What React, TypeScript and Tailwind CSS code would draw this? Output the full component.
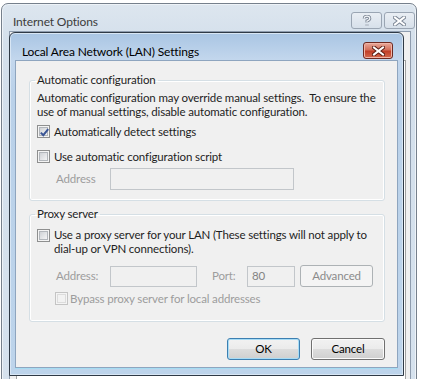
import clsx from "clsx";

const font = "font-['Lato',sans-serif]";

function CheckBox({ checked = false, disabled = false }: { checked?: boolean; disabled?: boolean }) {
  return (
    <span
      className={clsx(
        "relative flex h-[13px] w-[13px] shrink-0 items-center justify-center border bg-[#f4f4f4]",
        disabled ? "border-[#c4c4c4]" : "border-[#8e8f8f]",
      )}
    >
      <span
        className={clsx(
          "h-[9px] w-[9px] border",
          disabled
            ? "border-[#dcdcdc] bg-[#f2f2f2]"
            : "border-[#b2b6bb] bg-[linear-gradient(135deg,#cfd2d6,#f4f4f5)]",
        )}
      />
      {checked && (
        <svg className="absolute left-[1px] top-[1px]" width="11" height="11" viewBox="0 0 11 11">
          <path d="M1.8 5.6 L4.3 8.2 L9.2 2.2" fill="none" stroke="#3a5595" strokeWidth="2" />
        </svg>
      )}
    </span>
  );
}

function TextBox({ className, value }: { className?: string; value?: string }) {
  return (
    <div
      className={clsx(
        "flex h-[21px] items-center border border-[#c2c6ca] bg-[#f0f0f0] px-[4px] text-[#838383]",
        className,
      )}
    >
      {value}
    </div>
  );
}

function Button({ label, primary = false, disabled = false, className }: { label: string; primary?: boolean; disabled?: boolean; className?: string }) {
  return (
    <div
      className={clsx(
        "flex items-center justify-center rounded-[3px] border",
        disabled
          ? "border-[#adb2b5] bg-[#f4f4f4] text-[#8b8b8b]"
          : primary
            ? "border-[#3c7fb1] bg-[linear-gradient(#f2f2f2_0%,#ebebeb_50%,#dddddd_50%,#cfcfcf_100%)] text-black shadow-[inset_0_0_0_1px_#a7dcf6]"
            : "border-[#707070] bg-[linear-gradient(#f2f2f2_0%,#ebebeb_50%,#dddddd_50%,#cfcfcf_100%)] text-black shadow-[inset_0_0_0_1px_#fbfbfb]",
        className,
      )}
    >
      {label}
    </div>
  );
}

function CloseGlyph({ dark }: { dark: string }) {
  return (
    <svg width="13" height="10" viewBox="0 0 13 10">
      <path d="M2 1.5 L11 8.5 M11 1.5 L2 8.5" stroke={dark} strokeWidth="4" strokeLinecap="square" />
      <path d="M2 1.5 L11 8.5 M11 1.5 L2 8.5" stroke="#ffffff" strokeWidth="2" strokeLinecap="square" />
    </svg>
  );
}

function HelpGlyph() {
  return (
    <svg width="10" height="12" viewBox="0 0 10 12">
      <path d="M2.2 3.6 Q2.2 1.2 5 1.2 Q7.8 1.2 7.8 3.6 Q7.8 5.2 5 6 L5 7.6 M5 9.6 L5 10.6" fill="none" stroke="#7b8594" strokeWidth="3" />
      <path d="M2.2 3.6 Q2.2 1.2 5 1.2 Q7.8 1.2 7.8 3.6 Q7.8 5.2 5 6 L5 7.6 M5 9.6 L5 10.6" fill="none" stroke="#f2f5f8" strokeWidth="1.2" />
    </svg>
  );
}

export default function App() {
  return (
    <div className={clsx("relative h-[379px] w-[424px] overflow-hidden whitespace-nowrap bg-white text-[11.5px] tracking-[-0.15px] text-[#1e1e1e]", font)}>
      {/* Internet Options (inactive, behind) */}
      <div className="absolute left-[1px] top-[3px] h-[420px] w-[416px] rounded-t-[7px] border border-[#76808c] bg-[linear-gradient(#dde6ef,#d3dfeb_40px,#d6e2ee)] shadow-[inset_0_0_0_1px_#eef3f8]">
        <div className="flex h-[27px] items-start justify-between">
          <span className="ml-[11px] mt-[10px] text-[12px] leading-[15px] text-[#3c3c3c]">Internet Options</span>
          <div className="mr-[1px] mt-[8px] flex gap-[2px]">
            <div className="flex h-[17px] w-[31px] items-center justify-center rounded-[3px] border border-[#9aa5b3] bg-[linear-gradient(#e9eef4,#d7e0ea)]">
              <HelpGlyph />
            </div>
            <div className="flex h-[17px] w-[31px] items-center justify-center rounded-[3px] border border-[#9aa5b3] bg-[linear-gradient(#e9eef4,#d7e0ea)]">
              <CloseGlyph dark="#7b8594" />
            </div>
          </div>
        </div>
        <div className="ml-[7px] mr-[5px] h-[400px] border border-[#8e9cae] bg-[#f0f0f0] pt-[28px]">
          <div className="ml-[6px] mr-[4px] h-[360px] border border-[#a0a0a0] bg-white" />
        </div>
      </div>

      {/* LAN settings dialog (active) */}
      <div className="absolute left-[9px] top-[32px] flex h-[344px] w-[395px] flex-col rounded-t-[6px] border border-[#2f3a46] bg-[linear-gradient(#a9c5e3,#c3d7ed_27px,#bad1e9_60px,#bdd4eb)] shadow-[inset_0_0_0_1px_#d8e6f4]">
        <div className="flex h-[27px] shrink-0 items-start justify-between">
          <span className="ml-[12px] mt-[11px] text-[12px] leading-[15px] text-black">Local Area Network (LAN) Settings</span>
          <div className="mr-[10px] mt-[9px] flex h-[17px] w-[30px] items-center justify-center rounded-[3px] border border-[#6e2a22] bg-[linear-gradient(#e9a99b,#d3705c_45%,#c13f28_55%,#d46a4f)] shadow-[inset_0_0_0_1px_#f0b5a8]">
            <CloseGlyph dark="#5a1d14" />
          </div>
        </div>
        <div className="mx-[5px] mb-[7px] flex-1 border border-[#8ea5bf] bg-[#f0f0f0] shadow-[0_1px_0_#a6dcf2]">
          <fieldset className="ml-[13px] mt-[12px] w-[356px] rounded-[3px] border border-[#d5dfe5] pb-[10px] pl-[7px] shadow-[inset_0_0_0_1px_#ffffff]">
            <legend className="-ml-[2px] px-[2px] leading-[14px]">Automatic configuration</legend>
            <p className="mt-[4px] leading-[14px]">
              Automatic configuration may override manual settings.&nbsp; To ensure the
              <br />
              use of manual settings, disable automatic configuration.
            </p>
            <label className="mt-[5px] flex items-center gap-[4px] leading-[15px]">
              <CheckBox checked />
              Automatically detect settings
            </label>
            <label className="mt-[10px] flex items-center gap-[4px] leading-[15px]">
              <CheckBox />
              Use automatic configuration script
            </label>
            <div className="ml-[19px] mt-[4px] flex items-center">
              <span className="w-[54px] text-[#9d9d9d]">Address</span>
              <TextBox className="h-[22px] w-[184px]" />
            </div>
          </fieldset>

          <fieldset className="ml-[13px] mt-[6px] w-[356px] rounded-[3px] border border-[#d5dfe5] pb-[15px] pl-[7px] shadow-[inset_0_0_0_1px_#ffffff]">
            <legend className="-ml-[2px] px-[2px] leading-[14px]">Proxy server</legend>
            <div className="mt-[7px] flex items-start gap-[4px] leading-[14px]">
              <span className="mt-[1px]">
                <CheckBox />
              </span>
              <span>
                Use a proxy server for your LAN (These settings will not apply to
                <br />
                dial-up or VPN connections).
              </span>
            </div>
            <div className="ml-[19px] mt-[9px] flex h-[22px] items-center text-[#9d9d9d]">
              <span className="w-[54px]">Address:</span>
              <TextBox className="w-[87px]" />
              <span className="ml-[15px] w-[35px]">Port:</span>
              <TextBox className="w-[48px]" value="80" />
              <Button label="Advanced" disabled className="ml-[5px] h-[22px] w-[73px]" />
            </div>
            <label className="ml-[18px] mt-[4px] flex items-center gap-[2px] leading-[15px] text-[#9d9d9d]">
              <CheckBox disabled />
              Bypass proxy server for local addresses
            </label>
          </fieldset>

          <div className="ml-[13px] mt-[16px] flex w-[356px] justify-end gap-[11px]">
            <Button label="OK" primary className="h-[22px] w-[73px]" />
            <Button label="Cancel" className="h-[22px] w-[74px]" />
          </div>
        </div>
      </div>
    </div>
  );
}
